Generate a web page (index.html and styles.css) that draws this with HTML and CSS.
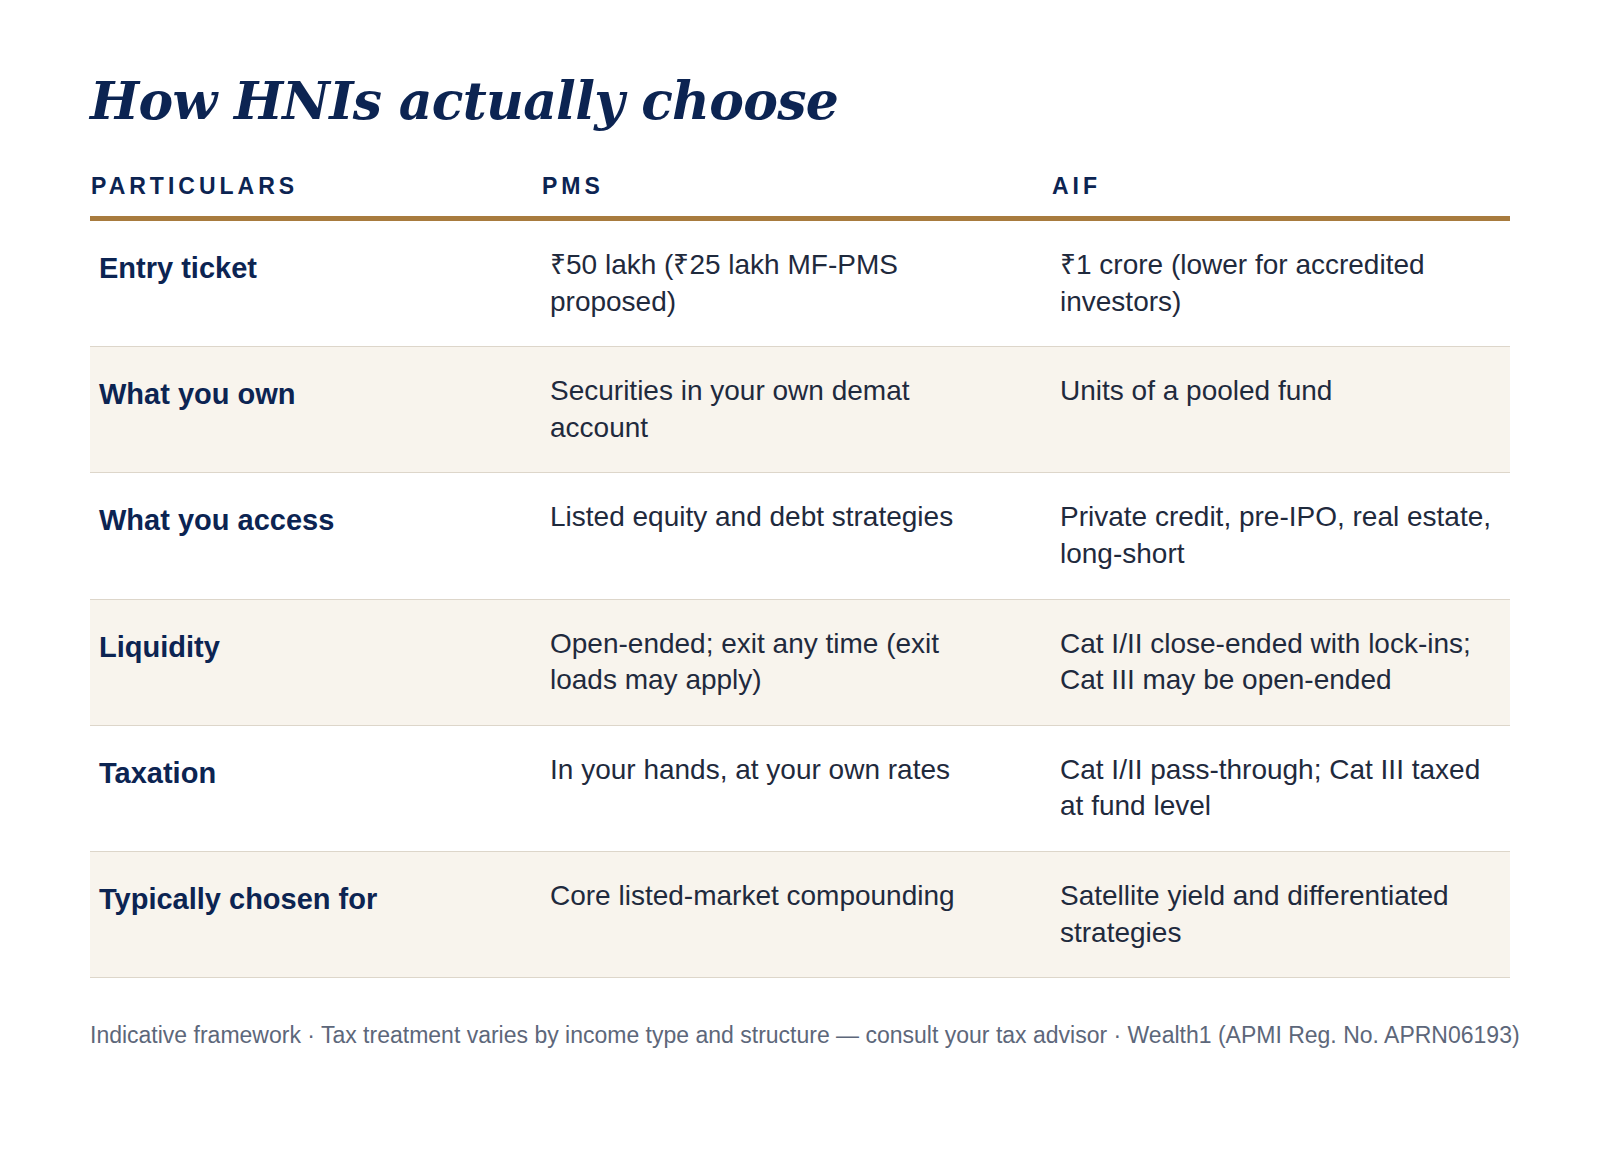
FILE: index.html
```html
<!DOCTYPE html>
<html lang="en">
<head>
<meta charset="utf-8">
<title>How HNIs actually choose</title>
<link rel="stylesheet" href="styles.css">
</head>
<body>
<main class="page">
  <h1 class="title">How HNIs actually choose</h1>
  <div class="table">
    <div class="row head">
      <div class="cell">Particulars</div>
      <div class="cell">PMS</div>
      <div class="cell">AIF</div>
    </div>
    <div class="row">
      <div class="cell label">Entry ticket</div>
      <div class="cell pms">₹50 lakh (₹25 lakh MF-PMS proposed)</div>
      <div class="cell aif">₹1 crore (lower for accredited investors)</div>
    </div>
    <div class="row alt">
      <div class="cell label">What you own</div>
      <div class="cell pms">Securities in your own demat account</div>
      <div class="cell aif">Units of a pooled fund</div>
    </div>
    <div class="row">
      <div class="cell label">What you access</div>
      <div class="cell pms">Listed equity and debt strategies</div>
      <div class="cell aif">Private credit, pre-IPO, real estate, long-short</div>
    </div>
    <div class="row alt">
      <div class="cell label">Liquidity</div>
      <div class="cell pms">Open-ended; exit any time (exit loads may apply)</div>
      <div class="cell aif">Cat I/II close-ended with lock-ins; Cat III may be open-ended</div>
    </div>
    <div class="row">
      <div class="cell label">Taxation</div>
      <div class="cell pms">In your hands, at your own rates</div>
      <div class="cell aif">Cat I/II pass-through; Cat III taxed at fund level</div>
    </div>
    <div class="row alt">
      <div class="cell label">Typically chosen for</div>
      <div class="cell pms">Core listed-market compounding</div>
      <div class="cell aif">Satellite yield and differentiated strategies</div>
    </div>
  </div>
  <p class="note">Indicative framework · Tax treatment varies by income type and structure — consult your tax advisor · Wealth1 (APMI Reg. No. APRN06193)</p>
</main>
</body>
</html>
```

FILE: styles.css
```css
html, body {
  margin: 0;
  padding: 0;
  background: #ffffff;
}
body {
  font-family: "Liberation Sans", Arial, sans-serif;
  color: #1f2a3d;
}
.page {
  width: 1420px;
  padding: 69px 90px 0 90px;
}
.title {
  margin: 0 0 41px 0;
  font-family: "DejaVu Serif", Georgia, serif;
  font-style: italic;
  font-weight: 700;
  font-size: 52px;
  line-height: 64px;
  letter-spacing: -0.7px;
  color: #0c2452;
}
.table {
  display: flex;
  flex-direction: column;
}
.row {
  display: grid;
  grid-template-columns: 451px 510px 1fr;
  border-bottom: 1px solid #ddd6ca;
}
.row.alt {
  background: #f8f4ed;
}
.row.head {
  border-bottom: 5px solid #a87b3e;
}
.head .cell {
  padding: 0 0 18px 1px;
  font-size: 23px;
  line-height: 24px;
  font-weight: 700;
  letter-spacing: 4px;
  text-transform: uppercase;
  color: #0c2452;
}
.cell {
  padding: 26px 24px 26px 9px;
  font-size: 28px;
  line-height: 36.6px;
}
.cell.label {
  font-size: 29px;
  font-weight: 700;
  color: #0c2452;
  padding-top: 29px;
}
.cell.pms {
  padding-right: 70px;
}
.cell.aif {
  padding-right: 10px;
}
.note {
  margin: 42px 0 0 0;
  font-size: 23px;
  line-height: 30px;
  color: #5d677a;
  white-space: nowrap;
}
```
